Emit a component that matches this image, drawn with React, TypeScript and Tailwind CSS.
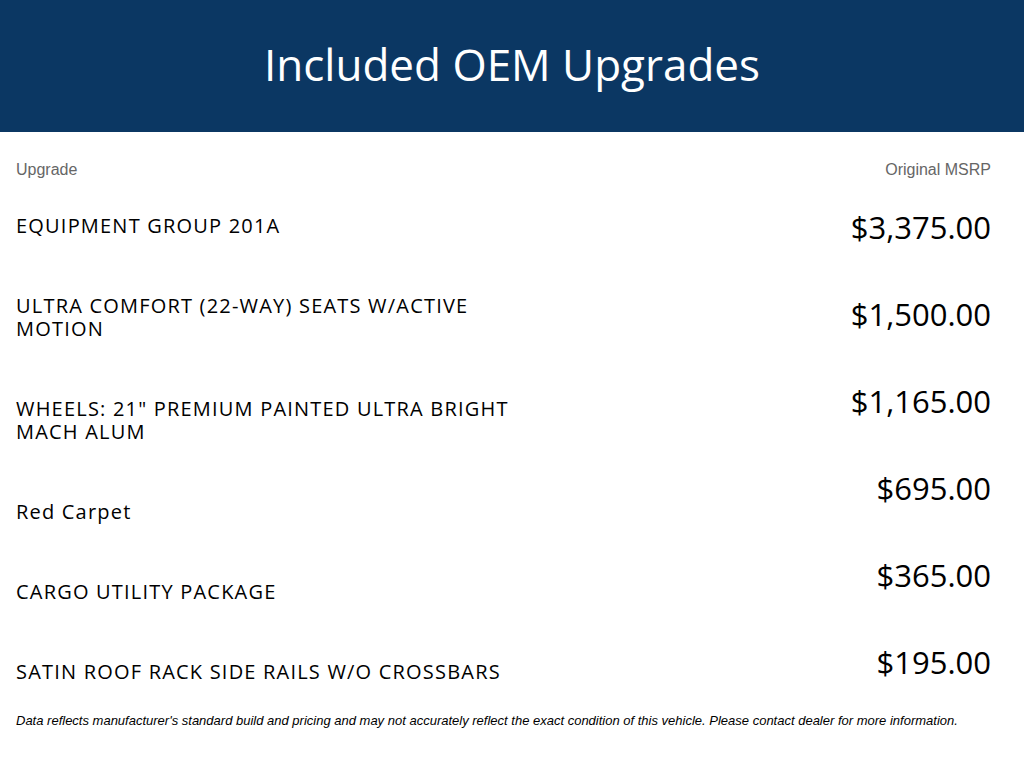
const upgrades = [
  "EQUIPMENT GROUP 201A",
  "ULTRA COMFORT (22-WAY) SEATS W/ACTIVE MOTION",
  'WHEELS: 21" PREMIUM PAINTED ULTRA BRIGHT MACH ALUM',
  "Red Carpet",
  "CARGO UTILITY PACKAGE",
  "SATIN ROOF RACK SIDE RAILS W/O CROSSBARS",
];

const prices = ["$3,375.00", "$1,500.00", "$1,165.00", "$695.00", "$365.00", "$195.00"];

export default function App() {
  return (
    <div className="min-h-screen bg-white text-black">
      <header className="flex h-[132px] items-center justify-center bg-[#0b3763] pb-1">
        <h1 className="font-['Open_Sans',sans-serif] text-[44px] leading-none text-white">
          Included OEM Upgrades
        </h1>
      </header>

      <section className="pl-4 pr-[33px] pt-[29px]">
        <div className="flex justify-between font-['Liberation_Sans',Arial,sans-serif] text-[16px] leading-[17px] text-[#666]">
          <span>Upgrade</span>
          <span>Original MSRP</span>
        </div>

        <div className="mt-[36px] flex justify-between">
          <ul className="flex w-[500px] flex-col gap-[57px] font-['Open_Sans',sans-serif] text-[20px] leading-[23px] tracking-[1.2px]">
            {upgrades.map((name) => (
              <li key={name}>{name}</li>
            ))}
          </ul>
          <ul className="-mt-[5px] flex flex-col items-end gap-[51px] font-['Open_Sans',sans-serif] text-[31px] leading-[36px]">
            {prices.map((price) => (
              <li key={price}>{price}</li>
            ))}
          </ul>
        </div>

        <p className="mt-[30px] font-['Liberation_Sans',Arial,sans-serif] text-[13px] italic leading-[15px]">
          Data reflects manufacturer's standard build and pricing and may not accurately reflect the exact
          condition of this vehicle. Please contact dealer for more information.
        </p>
      </section>
    </div>
  );
}
